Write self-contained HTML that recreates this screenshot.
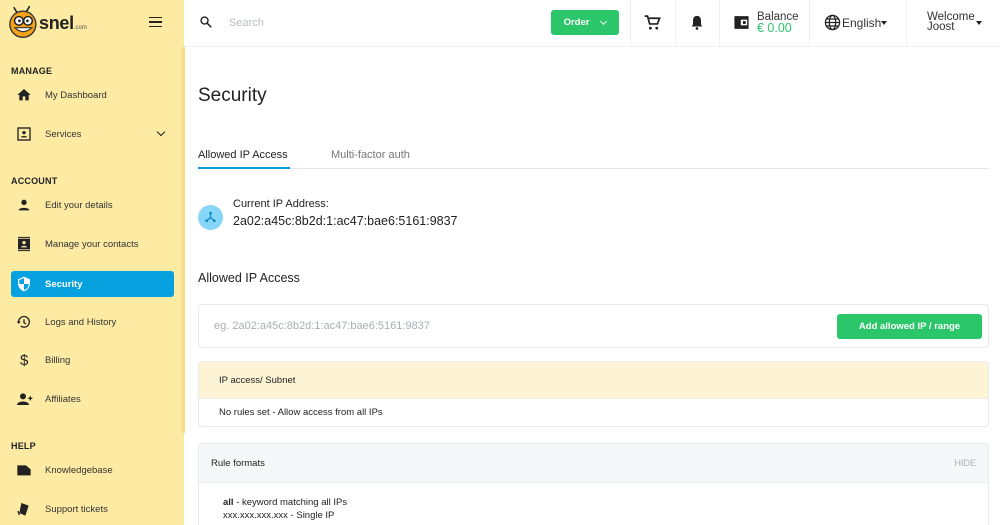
<!DOCTYPE html>
<html><head><meta charset="utf-8"><style>
*{box-sizing:border-box;margin:0;padding:0}
html,body{width:1000px;height:525px;overflow:hidden}
body{font-family:"Liberation Sans",sans-serif;background:#fff;position:relative;color:#222}
.sb{position:absolute;left:0;top:0;width:184px;height:525px;background:#fdeaa3}
.sb .scroll{position:absolute;left:181px;top:47px;width:4px;height:386px;background:#f9dc88}
.sec{position:absolute;left:11px;font-size:9px;font-weight:bold;color:#222;letter-spacing:.2px}
.it{position:absolute;left:11px;width:163px;height:26px;font-size:9.5px;color:#333;display:flex;align-items:center;padding-left:34px;border-radius:3px}
.it svg{position:absolute;left:5px;top:5px}
.it.act{background:#07a1e0;color:#fff;font-weight:bold}
.hdr{position:absolute;left:184px;top:0;right:0;height:47px;border-bottom:1px solid #eceeef;background:#fff}
.vd{position:absolute;top:0;width:1px;height:46px;background:#eef0f1}
.main{position:absolute;left:198px}
.box{position:absolute;left:198px;width:791px;border:1px solid #e8eaec;border-radius:4px;background:#fff;overflow:hidden}
.btn{background:#2bc66a;color:#fff;font-weight:bold;border-radius:3px;position:absolute;font-size:9.5px;display:flex;align-items:center;justify-content:center}
</style></head><body>
<div class="sb">
<div class="scroll"></div>
<svg style="position:absolute;left:7px;top:5px" width="34" height="34" viewBox="0 0 30 30"><path d="M9 7 L6 2 M17 6 L20 1" stroke="#222" stroke-width="1.4"/><circle cx="14" cy="17" r="11.5" fill="#f5a31a" stroke="#333" stroke-width="1.2"/><circle cx="10.5" cy="14" r="3.8" fill="#fff" stroke="#222" stroke-width="1.3"/><circle cx="18.5" cy="14" r="3.8" fill="#fff" stroke="#222" stroke-width="1.3"/><circle cx="11" cy="14" r="1.2" fill="#222"/><circle cx="18" cy="14" r="1.2" fill="#222"/><path d="M7 20 Q14 27 22 20 Z" fill="#fff" stroke="#333"/></svg>
<div style="position:absolute;left:39px;top:13px;font-size:18px;font-weight:bold;color:#222;letter-spacing:-.3px">snel<span style="font-size:6px;font-weight:normal;color:#555;letter-spacing:0">.com</span></div>
<div style="position:absolute;left:149px;top:17px;width:13px;height:10px;border-top:1.5px solid #222;border-bottom:1.5px solid #222"><div style="margin-top:3px;height:1.5px;background:#222"></div></div>
<div class="sec" style="top:66px">MANAGE</div>
<div class="it" style="top:82px"><svg width="16" height="16" viewBox="0 0 24 24"><path d="M10 20v-6h4v6h5v-8h3L12 3 2 12h3v8z" fill="#222"/></svg>My Dashboard</div>
<div class="it" style="top:121px"><svg width="16" height="16" viewBox="0 0 24 24"><rect x="3" y="3" width="18" height="18" fill="none" stroke="#222" stroke-width="2"/><circle cx="12" cy="10" r="2.5" fill="#222"/><path d="M7 17c1-3 9-3 10 0z" fill="#222"/></svg>Services<span style="position:absolute;right:10px;top:8px;width:6px;height:6px;border-right:1.5px solid #222;border-bottom:1.5px solid #222;transform:rotate(45deg)"></span></div>
<div class="sec" style="top:176px">ACCOUNT</div>
<div class="it" style="top:192px"><svg width="16" height="16" viewBox="0 0 24 24"><circle cx="12" cy="8" r="4" fill="#222"/><path d="M4 20c0-5 16-5 16 0z" fill="#222"/></svg>Edit your details</div>
<div class="it" style="top:231px"><svg width="16" height="16" viewBox="0 0 24 24"><rect x="3" y="4" width="18" height="16" fill="#222"/><circle cx="12" cy="10" r="2.5" fill="#fdeaa3"/><path d="M7 17c1-3 9-3 10 0z" fill="#fdeaa3"/><path d="M3 2h18M3 22h18" stroke="#222" stroke-width="1.5"/></svg>Manage your contacts</div>
<div class="it act" style="top:271px"><svg width="16" height="16" viewBox="0 0 24 24"><path d="M12 1L3 5v6c0 6 4 10 9 12 5-2 9-6 9-12V5z" fill="#fff"/><path d="M12 3v9H5V6zM12 12h7c0 5-3 8-7 9z" fill="#07a1e0"/></svg>Security</div>
<div class="it" style="top:309px"><svg width="16" height="16" viewBox="0 0 24 24"><path d="M4 12a8 8 0 1 1 3 6" fill="none" stroke="#222" stroke-width="2"/><path d="M1 11l3 4 3-4z" fill="#222"/><path d="M12 8v5l3 2" fill="none" stroke="#222" stroke-width="2"/></svg>Logs and History</div>
<div class="it" style="top:347px"><span style="position:absolute;left:9px;font-size:15px;color:#222">$</span>Billing</div>
<div class="it" style="top:386px"><svg width="18" height="16" viewBox="0 0 26 24"><circle cx="10" cy="8" r="4.5" fill="#222"/><path d="M1 21c0-7 18-7 18 0z" fill="#222"/><path d="M21 8v6M18 11h6" stroke="#222" stroke-width="2"/></svg>Affiliates</div>
<div class="sec" style="top:441px">HELP</div>
<div class="it" style="top:457px"><svg width="16" height="16" viewBox="0 0 24 24"><path d="M2 5h13l7 6v9H2z" fill="#222"/></svg>Knowledgebase</div>
<div class="it" style="top:496px"><svg width="16" height="16" viewBox="0 0 24 24"><path d="M8 3l11 4-5 15-9-4z" fill="#222"/><path d="M3 15l2 6" stroke="#222" stroke-width="2"/></svg>Support tickets</div>
</div>

<div class="hdr">
<svg style="position:absolute;left:15px;top:15px" width="14" height="14" viewBox="0 0 24 24"><circle cx="9.5" cy="9.5" r="6" fill="none" stroke="#222" stroke-width="2.4"/><path d="M14 14l7 7" stroke="#222" stroke-width="2.6"/></svg>
<div style="position:absolute;left:45px;top:17px;font-size:11px;color:#b8bcc2">Search</div>
<div class="btn" style="left:367px;top:10px;width:68px;height:25px">Order<span style="margin-left:12px;margin-top:-3px;width:5px;height:5px;border-right:1.5px solid #fff;border-bottom:1.5px solid #fff;transform:rotate(45deg)"></span></div>
<div class="vd" style="left:446px"></div>
<svg style="position:absolute;left:460px;top:14px" width="17" height="17" viewBox="0 0 24 24"><path d="M1 3h4l3 11h11l3-8H7" fill="none" stroke="#222" stroke-width="2.4"/><circle cx="9" cy="20" r="2" fill="#222"/><circle cx="18" cy="20" r="2" fill="#222"/></svg>
<div class="vd" style="left:491px"></div>
<svg style="position:absolute;left:505px;top:14px" width="16" height="17" viewBox="0 0 24 24"><path d="M12 2c-4 0-6 3-6 7v6l-2 3h16l-2-3V9c0-4-2-7-6-7z" fill="#222"/><circle cx="12" cy="21" r="2" fill="#222"/></svg>
<div class="vd" style="left:535px"></div>
<svg style="position:absolute;left:549px;top:14px" width="17" height="17" viewBox="0 0 24 24"><rect x="2" y="3" width="20" height="18" rx="1" fill="#222"/><rect x="11" y="8" width="9" height="8" fill="#fff"/><rect x="14" y="10" width="4" height="4" fill="#222"/></svg>
<div style="position:absolute;left:573px;top:12px;font-size:11.5px;color:#333;line-height:11px">Balance<br><span style="color:#2bc66a;font-size:12.5px">€ 0.00</span></div>
<div class="vd" style="left:625px"></div>
<svg style="position:absolute;left:640px;top:14px" width="17" height="17" viewBox="0 0 24 24" fill="none" stroke="#222" stroke-width="1.8"><circle cx="12" cy="12" r="10"/><ellipse cx="12" cy="12" rx="4.5" ry="10"/><path d="M2 12h20M4 7h16M4 17h16"/></svg>
<div style="position:absolute;left:658px;top:16px;font-size:12px;color:#333">English</div>
<div style="position:absolute;left:697px;top:21px;border:3px solid transparent;border-top:4px solid #222"></div>
<div class="vd" style="left:722px"></div>
<div style="position:absolute;left:743px;top:12px;font-size:11.5px;color:#333;line-height:10px">Welcome<br>Joost</div>
<div style="position:absolute;left:792px;top:21px;border:3px solid transparent;border-top:4px solid #222"></div>
</div>

<div class="main" style="top:85px;font-size:19px;color:#222">Security</div>
<div class="main" style="top:149px;font-size:11px;color:#222">Allowed IP Access</div>
<div style="position:absolute;left:331px;top:149px;font-size:11px;color:#777">Multi-factor auth</div>
<div style="position:absolute;left:198px;top:168px;width:791px;height:1px;background:#e3e5e8"></div>
<div style="position:absolute;left:198px;top:167px;width:92px;height:2px;background:#07a1e0;z-index:2"></div>

<div style="position:absolute;left:198px;top:205px;width:25px;height:25px;border-radius:50%;background:#86d6f7"></div>
<svg style="position:absolute;left:204px;top:211px" width="13" height="13" viewBox="0 0 24 24"><path d="M12 4v8M12 12l-7 6M12 12l7 6" stroke="#0a84c6" stroke-width="2.2"/><circle cx="12" cy="4" r="2.5" fill="#0a84c6"/><circle cx="5" cy="18" r="2.5" fill="#0a84c6"/><circle cx="19" cy="18" r="2.5" fill="#0a84c6"/></svg>
<div style="position:absolute;left:233px;top:198px;font-size:11px;color:#222">Current IP Address:</div>
<div style="position:absolute;left:233px;top:214px;font-size:12.5px;color:#222">2a02:a45c:8b2d:1:ac47:bae6:5161:9837</div>

<div class="main" style="top:271px;font-size:12.5px;color:#222">Allowed IP Access</div>

<div class="box" style="top:304px;height:44px">
<div style="position:absolute;left:15px;top:15px;font-size:11px;color:#a9adb3">eg. 2a02:a45c:8b2d:1:ac47:bae6:5161:9837</div>
<div class="btn" style="left:638px;top:9px;width:145px;height:25px">Add allowed IP / range</div>
</div>

<div class="box" style="top:361px;height:66px">
<div style="height:37px;background:#fcf4d4;border-bottom:1px solid #eceeef;font-size:9.5px;padding:13px 0 0 20px;color:#222">IP access/ Subnet</div>
<div style="font-size:9.5px;padding:8px 0 0 20px;color:#222">No rules set - Allow access from all IPs</div>
</div>

<div class="box" style="top:443px;height:82px;border-bottom:none;border-radius:4px 4px 0 0">
<div style="height:39px;background:#f6f7f9;border-bottom:1px solid #eceeef;font-size:9.5px;padding:14px 0 0 12px;color:#222">Rule formats<span style="position:absolute;right:12px;color:#a9adb3;font-size:9px">HIDE</span></div>
<div style="font-size:9.5px;padding:13px 0 0 24px;color:#222;line-height:13px"><b>all</b> - keyword matching all IPs<br>xxx.xxx.xxx.xxx - Single IP</div>
</div>
</body></html>
